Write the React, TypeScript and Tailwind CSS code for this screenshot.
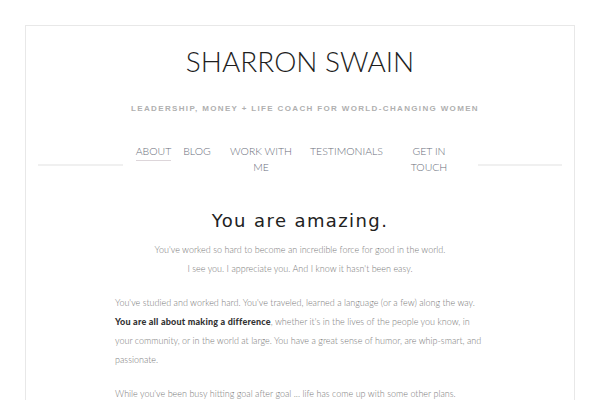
import React from "react";

const navItems = [
  { label: ["ABOUT"], w: "w-[46px]", active: true },
  { label: ["BLOG"], w: "w-[41px]" },
  { label: ["WORK WITH", "ME"], w: "w-[87px]" },
  { label: ["TESTIMONIALS"], w: "w-[84px]" },
  { label: ["GET IN", "TOUCH"], w: "w-[81px]" },
];

export default function App() {
  return (
    <div className="bg-white pt-[25px] px-[25px] overflow-hidden h-[400px]">
      <div className="border border-[#e8e8e8] border-b-0 px-[12px] h-[400px]">
        <h1 className="pt-[19px] text-center text-[28px] leading-[32px] font-light text-[#1e1e1e] font-['Lato','Liberation_Sans',sans-serif]">
          SHARRON SWAIN
        </h1>
        <p className="mt-[27px] pl-[10px] text-center text-[8px] leading-[10px] font-bold tracking-[1.35px] text-[#b0b0b0] font-['Liberation_Sans',sans-serif]">
          LEADERSHIP, MONEY + LIFE COACH FOR WORLD-CHANGING WOMEN
        </p>
        <nav className="mt-[29px] flex items-start font-['Lato','Liberation_Sans',sans-serif] font-light text-[10.5px] leading-[16px] text-[#6a6e7b]">
          <div className="mt-[21px] h-[2px] flex-1 bg-[#f0f0f0]" />
          <ul className="mx-[8px] flex">
            {navItems.map((it) => (
              <li key={it.label.join(" ")} className={`${it.w} text-center whitespace-nowrap`}>
                {it.active ? (
                  <span className="inline-block border-b border-[#ddd6da] pb-[1px]">{it.label[0]}</span>
                ) : (
                  it.label.map((l) => <div key={l}>{l}</div>)
                )}
              </li>
            ))}
          </ul>
          <div className="mt-[21px] h-[2px] flex-1 bg-[#f0f0f0]" />
        </nav>
        <h2 className="mt-[34px] text-center text-[18px] leading-[24px] tracking-[1.4px] text-[#222] font-['DejaVu_Sans',sans-serif]">
          You are amazing.
        </h2>
        <div className="mx-auto mt-[7px] w-[370px] font-['Lato','Liberation_Sans',sans-serif] text-[9px] leading-[19px] text-[#7a7a7a] font-light">
          <p className="text-center">
            You've worked so hard to become an incredible force for good in the world.
            <br />I see you. I appreciate you. And I know it hasn't been easy.
          </p>
          <p className="mt-[15px]">
            You've studied and worked hard. You've traveled, learned a language (or a few) along the way.{" "}
            <strong className="font-black tracking-[0.2px] text-[#333]">You are all about making a difference</strong>, whether it's in the
            lives of the people you know, in your community, or in the world at large. You have a great sense of humor,
            are whip-smart, and passionate.
          </p>
          <p className="mt-[15px]">
            While you've been busy hitting goal after goal ... life has come up with some other plans.
          </p>
        </div>
      </div>
    </div>
  );
}
